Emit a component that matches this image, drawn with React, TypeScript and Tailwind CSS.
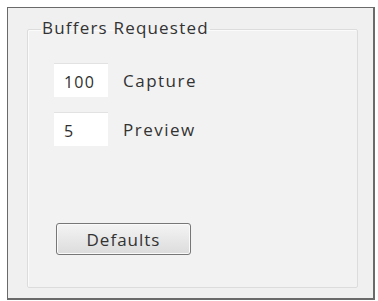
import React from 'react';

const font = { fontFamily: '"Open Sans", "Noto Sans", sans-serif' };

function NumberField({ value, label }: { value: string; label: string }) {
    return (
        <div className="flex items-center">
            <input
                readOnly
                value={value}
                className="h-[34px] w-[54px] border-t border-[#e2e2e2] bg-white pl-[10px] pt-[2px] text-[16px] tracking-[1.2px] text-[#2e2e2e] outline-none"
            />
            <span className="ml-[15px] pt-[2px] text-[17px] tracking-[1.5px] text-[#333]">{label}</span>
        </div>
    );
}

export default function App() {
    return (
        <div className="h-[301px] w-[378px] bg-white pl-[7px] pt-[7px]" style={font}>
            <div className="h-[293px] w-[368px] border border-r-2 border-b-2 border-[#6a6a6a] bg-[#f0f0f0] pl-[19px] pr-[15px] pt-[8px] pb-[10px]">
                <fieldset className="h-full rounded-[2px] border border-[#dcdcdc] bg-[#f2f2f2] pl-[26px] shadow-[inset_1px_1px_0_#fbfbfb]">
                    <legend className="-ml-[13px] px-[1px] pt-[2px] pb-[4px] text-[17px] leading-[20px] tracking-[1.2px] text-[#333]">
                        Buffers Requested
                    </legend>
                    <div className="mt-[21px] flex flex-col gap-[15px]">
                        <NumberField value="100" label="Capture" />
                        <NumberField value="5" label="Preview" />
                    </div>
                    <button className="ml-[2px] mt-[77px] flex h-[32px] w-[135px] items-center justify-center rounded-[3px] border border-[#777] bg-gradient-to-b from-[#f4f4f4] to-[#dcdcdc] pt-[1px] text-[17px] tracking-[1px] text-[#333] shadow-[inset_0_0_0_1px_#fafafa]">
                        Defaults
                    </button>
                </fieldset>
            </div>
        </div>
    );
}
